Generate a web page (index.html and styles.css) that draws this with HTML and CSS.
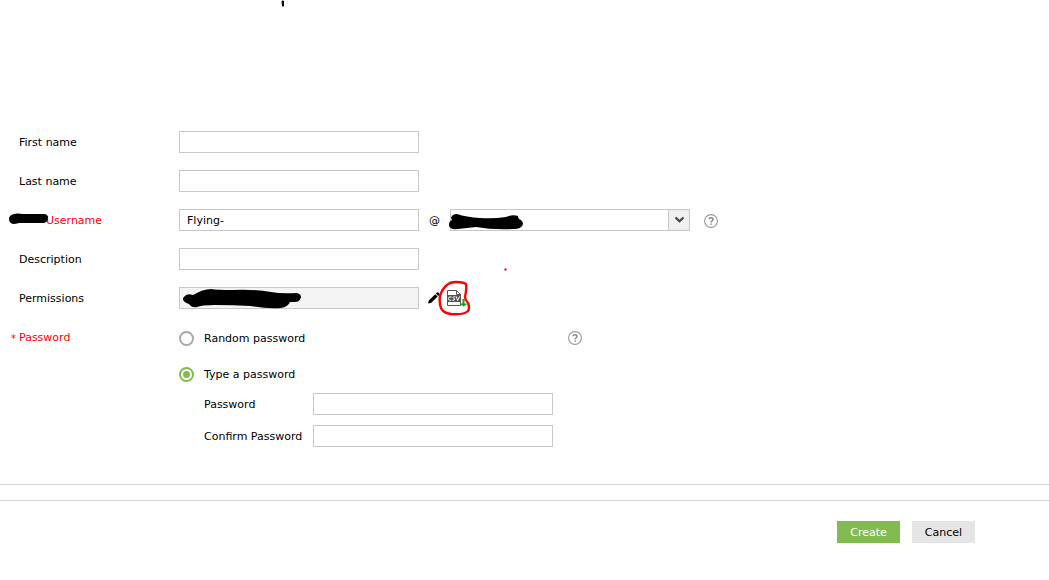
FILE: index.html
```html
<!DOCTYPE html>
<html lang="en">
<head>
<meta charset="utf-8">
<meta name="viewport" content="width=device-width, initial-scale=1">
<title>Create user</title>
<link rel="stylesheet" href="styles.css">
</head>
<body>
<svg class="top-mark" width="4" height="7" viewBox="0 0 4 7" aria-hidden="true"><path d="M.5 1Q2 0 3 1V6Q2 7 1 6Z"/></svg>
<form class="user-form">
  <div class="fields">
    <div class="row">
      <label class="name" for="first">First name</label>
      <input class="box" id="first" type="text">
    </div>
    <div class="row">
      <label class="name" for="last">Last name</label>
      <input class="box" id="last" type="text">
    </div>
    <div class="row">
      <label class="name required prefixed" for="user">Username
        <svg class="mark mark-label" width="40" height="12" viewBox="0 0 40 12" aria-hidden="true"><path d="M5 1Q8 0 14 1H35Q39 1 39 5Q39 9 35 10H10Q7 11 4 11Q0 10 0 6Q0 2 5 1Z"/></svg>
      </label>
      <input class="box" id="user" type="text" value="Flying-">
      <span class="at">@</span>
      <div class="domain">
        <select class="select" aria-label="Domain"><option></option></select>
        <span class="arrow"><svg width="11" height="8" viewBox="0 0 11 8" aria-hidden="true"><path d="M1.500 1.500L5.500 5.200L9.500 1.500"/></svg></span>
        <svg class="mark mark-domain" width="76" height="17" viewBox="0 0 76 17" aria-hidden="true"><path d="M3 4Q4 0 9 0Q18 3 32 4Q45 5 58 3Q65 0 70 2Q70 5 73 6Q77 10 73 13Q71 15 65 15Q45 16 28 13L10 15Q1 16 1 11Q1 7 4 6Z"/></svg>
      </div>
      <button class="help" type="button" aria-label="Username help"><svg width="14" height="14" viewBox="0 0 14 14" aria-hidden="true"><circle cx="7" cy="7" r="6.400"/><path d="M5 5.200Q5.200 3.700 7 3.700Q9 3.700 9 5.400Q9 6.300 8 6.900Q7.100 7.400 7.100 8.400M7.100 9.500V10.800"/></svg></button>
    </div>
    <div class="row">
      <label class="name" for="desc">Description</label>
      <input class="box" id="desc" type="text">
    </div>
    <div class="row">
      <label class="name" for="perm">Permissions</label>
      <div class="permission">
        <input class="box locked" id="perm" type="text" readonly>
        <svg class="mark mark-perm" width="119" height="21" viewBox="0 0 119 21" aria-hidden="true"><path d="M2 8Q4 5 10 7Q20 1 28 1Q33 2 50 2Q70 1 88 4Q98 6 114 5Q118 6 118 9Q117 14 112 14H107Q105 19 98 20Q84 21 68 18Q50 17 32 17Q18 17 14 19Q9 20 6 16Q0 14 0 11Q0 9 2 8Z"/></svg>
      </div>
      <button class="edit" type="button" aria-label="Edit permissions"><svg width="12" height="12" viewBox="0 0 12 12" aria-hidden="true"><path d="M0 11.500L.8 8.400L7.200 2.200L9.700 4.500L3.300 10.700ZM7.900 1.600L9 .6Q9.800 0 10.600.7L11.300 1.400Q12 2.200 11.300 3L10.300 4Z"/></svg></button>
      <button class="csv" type="button" aria-label="Download CSV">
        <svg width="34" height="38" viewBox="0 0 34 38" aria-hidden="true">
          <path class="sheet" d="M9.500 10.500H18.500L22.500 14.500V25.500H9.500ZM18.500 10.500V14.500H22.500"/>
          <path class="band" d="M9 15H23V22H9Z"/>
          <path class="letters" d="M13.500 17Q10.500 16 10.500 18.500Q10.500 21 13.200 20.300M17.300 17Q15 16.200 15 17.600Q15.200 18.500 16.500 18.800Q17.200 20.700 14.500 20.300M18.200 16.400L19.700 20.500L21.600 16.400"/>
          <path class="down" d="M24.500 19H26.500V23.500H28.500V24.500L25.500 26.500L22.500 24.500V23.500H24.500Z"/>
          <path class="ring" d="M28 4Q25 2 18 2Q12 2 9 5Q4 9 2 16Q1 23 3 28Q5 33 13 34Q26 35 30 31Q32 28 30 23Q27 20 27 17Q29 7 28 4Z"/>
        </svg>
      </button>
      <svg class="dot" width="3" height="3" viewBox="0 0 3 3" aria-hidden="true"><circle cx="1.500" cy="1.500" r="1.200"/></svg>
    </div>
    <fieldset class="row password" aria-label="Password">
      <span class="name required"><span class="star">*</span>Password</span>
      <div class="choices">
        <div class="choice">
          <input class="radio" id="random" type="radio" name="mode">
          <label for="random">Random password</label>
          <button class="help push" type="button" aria-label="Password help"><svg width="14" height="14" viewBox="0 0 14 14" aria-hidden="true"><circle cx="7" cy="7" r="6.400"/><path d="M5 5.200Q5.200 3.700 7 3.700Q9 3.700 9 5.400Q9 6.300 8 6.900Q7.100 7.400 7.100 8.400M7.100 9.500V10.800"/></svg></button>
        </div>
        <div class="choice">
          <input class="radio" id="typed" type="radio" name="mode" checked>
          <label for="typed">Type a password</label>
        </div>
        <div class="secrets">
          <label for="pass">Password</label>
          <input class="box" id="pass" type="password">
          <label for="confirm">Confirm Password</label>
          <input class="box" id="confirm" type="password">
        </div>
      </div>
    </fieldset>
  </div>
  <div class="divider"></div>
  <div class="actions">
    <button class="button primary" type="submit">Create</button>
    <button class="button" type="button">Cancel</button>
  </div>
</form>
</body>
</html>
```
FILE: styles.css
```css
* { box-sizing: border-box; }
body {
  margin: 0;
  background: #fff;
  color: #000;
  font: 11px/14px Verdana, "DejaVu Sans", sans-serif;
}
input, select, button { font: inherit; color: inherit; margin: 0; border-radius: 0; }
button { padding: 0; border: 0; background: none; cursor: pointer; }
svg { display: block; }
label { padding-top: 2px; }
.top-mark { position: absolute; left: 281px; top: 0; }
.user-form { padding-top: 131px; }
.fields {
  display: flex;
  flex-direction: column;
  gap: 17px;
  padding: 0 19px 37px;
}
.row { display: flex; align-items: center; position: relative; min-height: 22px; }
.name { flex: 0 0 160px; position: relative; }
.required { color: #f00; }
.prefixed { padding-left: 27px; }
.star { position: absolute; left: -8px; top: 2px; font-size: 10px; }
.box {
  display: block;
  width: 240px;
  height: 22px;
  padding: 0 7px;
  border: 1px solid #c8c8c8;
  background: #fff;
  outline: 0;
}
.locked { background: #f4f4f4; }
.at { width: 31px; text-align: center; padding-top: 2px; }
.domain, .permission { position: relative; }
.select {
  display: block;
  appearance: none;
  width: 240px;
  height: 22px;
  border: 1px solid #c8c8c8;
  background: #fff;
}
.arrow {
  position: absolute;
  right: 0;
  top: 0;
  display: flex;
  align-items: center;
  justify-content: center;
  width: 22px;
  height: 22px;
  border: 1px solid #c8c8c8;
  background: #f0f0f0;
  pointer-events: none;
}
.arrow path { fill: none; stroke: #444; stroke-width: 2.2; }
.mark { position: absolute; pointer-events: none; }
.mark-label { left: -10px; top: 1px; }
.mark-domain { left: -2px; top: 5px; }
.mark-perm { left: 4px; top: 1px; }
.help { margin-left: 14px; padding-top: 1px; }
.help circle { fill: none; stroke: #999; stroke-width: 1.1; }
.help path { fill: none; stroke: #888; stroke-width: 1.5; }
.edit { margin-left: 9px; }
.csv { margin: -10px 0 -10px -2px; padding-top: 2px; }
.sheet { fill: #fff; stroke: #555; }
.band { fill: #555; }
.letters { fill: none; stroke: #fff; stroke-width: 1; }
.down { fill: #00ad10; }
.ring { fill: none; stroke: #f00; stroke-width: 2.4; stroke-linejoin: round; }
.dot { position: absolute; left: 485px; top: -19px; fill: #e8202c; }
.password { align-items: flex-start; margin: 0; padding: 4px 0 0; border: 0; min-width: 0; }
.password .name { padding-top: 1px; }
.choices { width: 403px; }
.choice { display: flex; align-items: center; height: 16px; margin-bottom: 20px; }
.choice label { margin-left: 10px; }
.radio {
  appearance: none;
  width: 15px;
  height: 15px;
  border: 2px solid #a5abad;
  border-radius: 50%;
  background: #fff;
}
.radio:checked { border-color: #82bc50; background: radial-gradient(circle, #82bc50 3px, #fff 4px); }
.choice .push { margin-left: auto; padding: 0 0 1px; }
.secrets {
  display: grid;
  grid-template-columns: 109px 240px;
  align-items: center;
  row-gap: 10px;
  margin-top: -9px;
  padding-left: 25px;
}
.divider { height: 17px; border: solid #d5d5d5; border-width: 1px 0; }
.actions { display: flex; justify-content: flex-end; gap: 12px; padding: 20px 74px 20px 0; }
.button { width: 63px; height: 22px; padding-top: 1px; background: #e5e5e5; }
.primary { background: #82bc50; color: #fff; }
```
